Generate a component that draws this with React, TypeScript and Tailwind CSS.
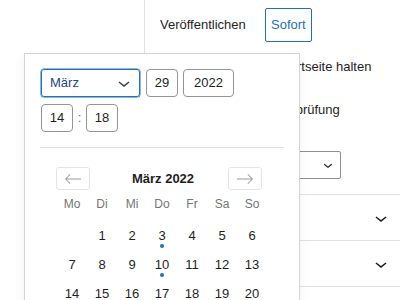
import React from "react";

function ChevronDown({ size = 24, color = "#1e1e1e" }: { size?: number; color?: string }) {
  return (
    <svg width={size} height={size} viewBox="0 0 24 24" fill={color}>
      <path d="M17.5 11.6L12 16l-5.5-4.4.9-1.2L12 14l4.5-3.6 1 1.2z" />
    </svg>
  );
}

function ArrowLeft() {
  return (
    <svg width="24" height="24" viewBox="0 0 24 24" fill="#9a9a9a">
      <path d="M20 11.6H5.6l3.9-3.9-.6-.6L4 12l4.9 4.9.6-.6-3.9-3.9H20z" />
    </svg>
  );
}

function ArrowRight() {
  return (
    <svg width="24" height="24" viewBox="0 0 24 24" fill="#9a9a9a">
      <path d="M4 11.6h14.4l-3.9-3.9.6-.6L20 12l-4.9 4.9-.6-.6 3.9-3.9H4z" />
    </svg>
  );
}

const weekdays = ["Mo", "Di", "Mi", "Do", "Fr", "Sa", "So"];
const cells: (number | null)[] = [null];
for (let d = 1; d <= 31; d++) cells.push(d);
const dotted = [3, 10];

export default function App() {
  return (
    <div className="relative w-[400px] h-[300px] overflow-hidden bg-white font-['Liberation_Sans',Arial,sans-serif] text-[13px] text-[#1e1e1e]">
      <div className="flex h-full">
        <div className="w-[144px] shrink-0" />
        <div className="flex-1 border-l border-[#e0e0e0] flex flex-col">
          <div className="flex items-center pt-[8px] pl-[15px]">
            <span className="w-[105px] leading-[20px]">Veröffentlichen</span>
            <div className="h-[34px] px-[5px] border border-[#2271b1] rounded-[2px] text-[#2271b1] flex items-center">
              Sofort
            </div>
          </div>
          <div className="mt-[15px] h-[20px] leading-[20px] pl-[53px] whitespace-nowrap">
            Oben auf der Startseite halten
          </div>
          <div className="mt-[23px] h-[20px] leading-[20px] pl-[43px] whitespace-nowrap">
            Ausstehende Überprüfung
          </div>
          <div className="mt-[31px] ml-[15px] w-[181px] h-[28px] border border-[#8c8f94] rounded-[2px] flex items-center justify-end pr-[3px]">
            <ChevronDown size={18} />
          </div>
          <div className="mt-[15px] border-b border-[#e0e0e0]" />
          <div className="h-[46px] border-b border-[#e0e0e0] flex items-center justify-end pr-[7px]">
            <ChevronDown />
          </div>
          <div className="h-[46px] border-b border-[#e0e0e0] flex items-center justify-end pr-[7px]">
            <ChevronDown />
          </div>
        </div>
      </div>

      <div className="absolute left-[24px] top-[53px] w-[276px] h-[280px] bg-white border border-[#d4d4d4] shadow-[0_3px_10px_rgba(0,0,0,0.06)] pt-[15px] px-[16px]">
        <div className="flex">
          <div className="w-[99px] h-[28px] border border-[#2271b1] shadow-[0_0_0_0.5px_#2271b1] rounded-[3px] flex items-center justify-between pl-[8px] pr-[3px] text-[#1d4a7c]">
            <span>März</span>
            <ChevronDown color="#3c434a" />
          </div>
          <div className="ml-[6px] w-[32px] h-[28px] border border-[#949494] rounded-[4px] flex items-center justify-center">
            29
          </div>
          <div className="ml-[5px] w-[51px] h-[28px] border border-[#949494] rounded-[4px] flex items-center justify-center">
            2022
          </div>
        </div>
        <div className="flex items-center mt-[7px]">
          <div className="w-[32px] h-[28px] border border-[#949494] rounded-[4px] flex items-center justify-center">
            14
          </div>
          <div className="w-[13px] text-center text-[#757575]">:</div>
          <div className="w-[32px] h-[28px] border border-[#949494] rounded-[4px] flex items-center justify-center">
            18
          </div>
        </div>
        <div className="mt-[15px] -ml-[1px] -mr-[1px] border-t border-[#dddddd]" />
        <div className="pl-[15px]">
          <div className="mt-[19px] w-[206px] flex items-center justify-between">
            <div className="w-[34px] h-[23px] border border-[#e4e4e4] rounded-[3px] flex items-center justify-center">
              <ArrowLeft />
            </div>
            <div className="font-bold text-[#1e1e1e] pl-[8px]">März 2022</div>
            <div className="w-[34px] h-[23px] border border-[#e4e4e4] rounded-[3px] flex items-center justify-center">
              <ArrowRight />
            </div>
          </div>
          <div className="ml-[1px] mt-[4px] grid grid-cols-[repeat(7,30px)]">
            {weekdays.map((w) => (
              <div key={w} className="h-[20px] leading-[20px] text-center text-[12px] text-[#757575]">
                {w}
              </div>
            ))}
          </div>
          <div className="ml-[1px] mt-[7px] grid grid-cols-[repeat(7,30px)]">
            {cells.map((d, i) => (
              <div key={i} className="relative h-[29px] flex items-center justify-center">
                {d !== null && <span>{d}</span>}
                {d !== null && dotted.includes(d) && (
                  <span className="absolute left-1/2 -translate-x-1/2 top-[23px] w-[4px] h-[4px] rounded-full bg-[#2271b1]" />
                )}
              </div>
            ))}
          </div>
        </div>
      </div>
    </div>
  );
}
